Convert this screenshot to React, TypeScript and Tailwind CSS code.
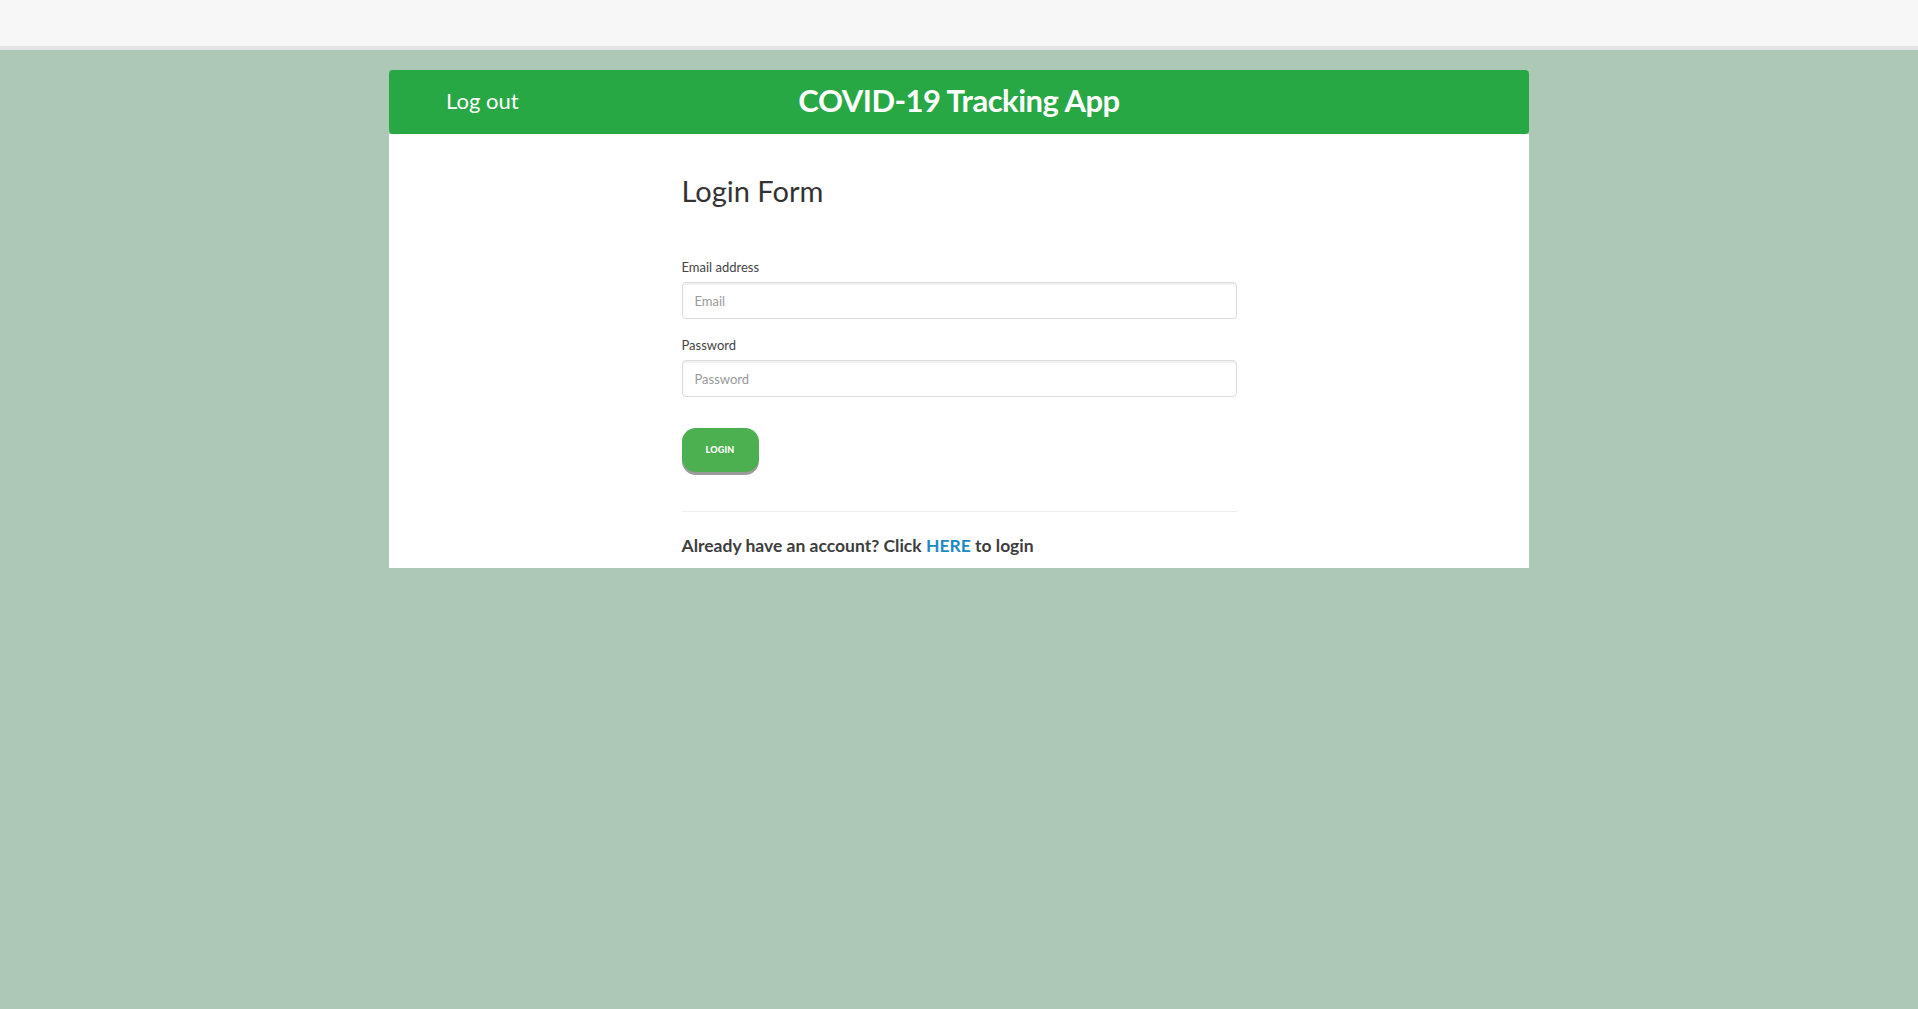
import React from "react";

export default function App() {
  return (
    <div className="min-h-[1009px] bg-[#adc9b6] font-['Lato',sans-serif]">
      <div className="h-[50px] bg-[#f7f7f7] border-b-[4px] border-[#e4e4e4]" />
      <div className="pt-[20px]">
        <div className="w-[1140px] mx-auto">
          <header className="h-[64px] bg-[#28a745] rounded-[4px] grid grid-cols-[1fr_auto_1fr] items-center">
            <div className="pl-[57px]">
              <span className="text-white text-[22px] leading-none">Log out</span>
            </div>
            <h1 className="text-white text-[31px] font-bold tracking-[-0.5px] leading-none pb-[4px]">
              COVID-19 Tracking App
            </h1>
            <div />
          </header>
          <main className="bg-white h-[434px] pt-[40px]">
            <div className="w-[555px] mx-auto">
              <h2 className="text-[#333333] text-[29px] leading-[33px] font-normal">Login Form</h2>
              <form className="mt-[51px] flex flex-col" onSubmit={(e) => e.preventDefault()}>
                <label className="text-[#444] text-[13px] leading-[18px] mb-[6px]">Email address</label>
                <input
                  type="email"
                  placeholder="Email"
                  className="h-[37px] w-full border border-[#dcdcdc] rounded-[4px] px-[12px] text-[13px] placeholder:text-[#999] shadow-[inset_0_2px_1px_rgba(0,0,0,0.06)] outline-none"
                />
                <label className="text-[#444] text-[13px] leading-[18px] mt-[17px] mb-[6px]">Password</label>
                <input
                  type="password"
                  placeholder="Password"
                  className="h-[37px] w-full border border-[#dcdcdc] rounded-[4px] px-[12px] text-[13px] placeholder:text-[#999] shadow-[inset_0_2px_1px_rgba(0,0,0,0.06)] outline-none"
                />
                <div className="mt-[31px]">
                  <button
                    type="submit"
                    className="w-[77px] h-[44px] rounded-[14px] bg-[#4caf50] text-white text-[9px] font-black tracking-[0.2px] shadow-[0_3px_0_#9a9a9a]"
                  >
                    LOGIN
                  </button>
                </div>
              </form>
              <hr className="mt-[39px] border-0 border-t border-[#eeeeee]" />
              <p className="mt-[22px] text-[17.5px] leading-[24px] font-bold text-[#3d3d3d]">
                Already have an account? Click <a className="text-[#1b8bc4]" href="#">HERE</a> to login
              </p>
            </div>
          </main>
        </div>
      </div>
    </div>
  );
}
